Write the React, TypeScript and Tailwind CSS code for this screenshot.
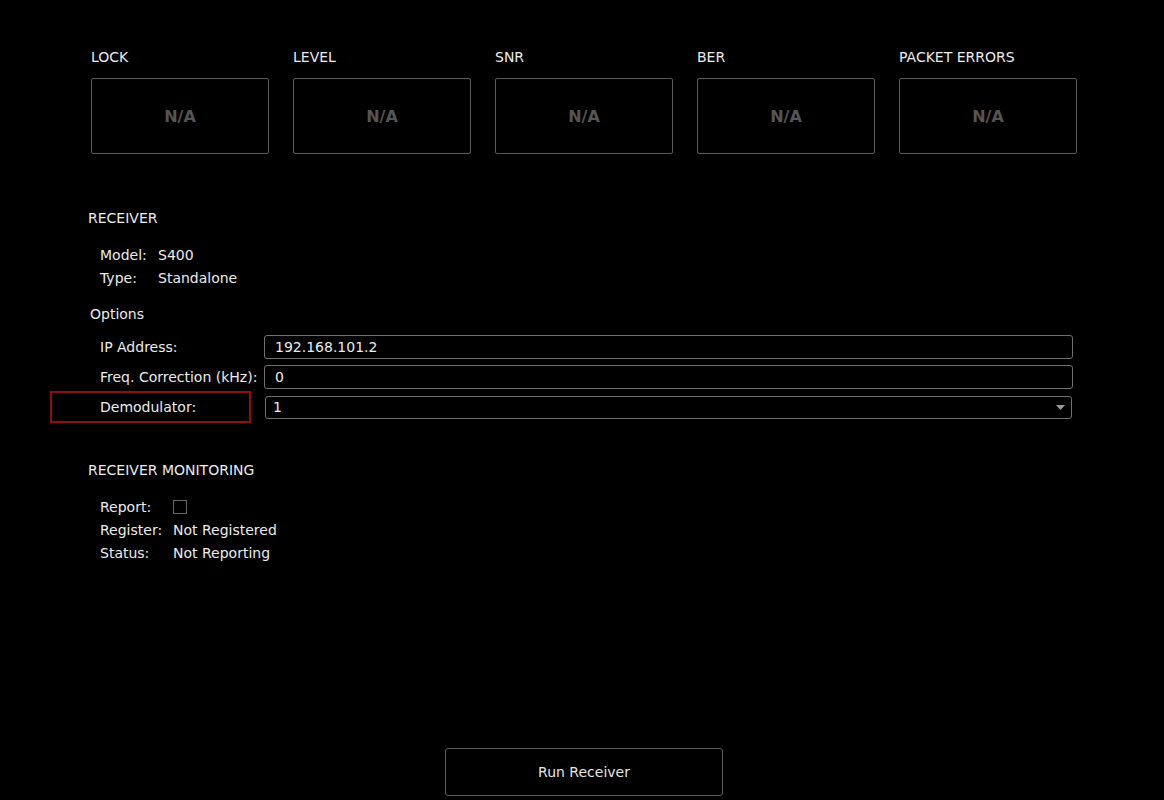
export default function App() {
  const meters = ["LOCK", "LEVEL", "SNR", "BER", "PACKET ERRORS"];

  return (
    <div
      className="h-[800px] w-full bg-black text-[14px] text-[#ececec] flex flex-col overflow-hidden"
      style={{ fontFamily: '"DejaVu Sans", "Liberation Sans", sans-serif' }}
    >
      {/* meters */}
      <div className="flex gap-6 pl-[91px] pt-[48px]">
        {meters.map((m) => (
          <div key={m} className="w-[178px]">
            <div className="leading-[18px] mb-[12px]">{m}</div>
            <div className="h-[76px] border border-[#5a5a5a] rounded-[2px] flex items-center justify-center pt-[2px]">
              <span className="font-bold text-[16px] text-[#555]">N/A</span>
            </div>
          </div>
        ))}
      </div>

      {/* receiver */}
      <div className="pl-[88px] mt-[55px] leading-[18px]">RECEIVER</div>
      <div className="pl-[100px] mt-[17px] leading-[23px]">
        <div className="flex">
          <span className="w-[58px]">Model:</span>
          <span>S400</span>
        </div>
        <div className="flex">
          <span className="w-[58px]">Type:</span>
          <span>Standalone</span>
        </div>
      </div>

      <div className="pl-[90px] mt-[15px] leading-[18px]">Options</div>
      <div className="pl-[100px] pr-[91px] mt-[12px] flex flex-col">
        <div className="flex items-center">
          <span className="w-[164px]">IP Address:</span>
          <div className="flex-1 h-[24px] border border-[#707070] rounded-[3px] pl-[10px] flex items-center">
            192.168.101.2
          </div>
        </div>
        <div className="flex items-center mt-[6px]">
          <span className="w-[164px]">Freq. Correction (kHz):</span>
          <div className="flex-1 h-[24px] border border-[#707070] rounded-[3px] pl-[10px] flex items-center">
            0
          </div>
        </div>
        <div className="flex items-center mt-[7px]">
          <span className="w-[165px] relative">
            Demodulator:
            <span className="absolute left-[-50px] top-[-6px] w-[201px] h-[32px] border-2 border-[#8a1208]" />
          </span>
          <div className="flex-1 mr-px h-[23px] border border-[#707070] rounded-[3px] pl-[7px] pr-[6px] flex items-center justify-between">
            <span>1</span>
            <svg width="9" height="5" viewBox="0 0 9 5">
              <path d="M0 0 L9 0 L4.5 5 Z" fill="#9a9a9a" />
            </svg>
          </div>
        </div>
      </div>

      {/* monitoring */}
      <div className="pl-[88px] mt-[42px] leading-[18px]">RECEIVER MONITORING</div>
      <div className="pl-[100px] mt-[17px] leading-[23px]">
        <div className="flex items-center">
          <span className="w-[73px]">Report:</span>
          <span className="w-[14px] h-[14px] border border-[#666] -mt-[2px]" />
        </div>
        <div className="flex">
          <span className="w-[73px]">Register:</span>
          <span>Not Registered</span>
        </div>
        <div className="flex">
          <span className="w-[73px]">Status:</span>
          <span>Not Reporting</span>
        </div>
      </div>

      {/* run */}
      <div className="mt-auto pb-[4px] pl-[445px]">
        <button className="w-[278px] h-[48px] border border-[#5a5a5a] rounded-[3px] bg-black text-[#e6e6e6]">
          Run Receiver
        </button>
      </div>
    </div>
  );
}
